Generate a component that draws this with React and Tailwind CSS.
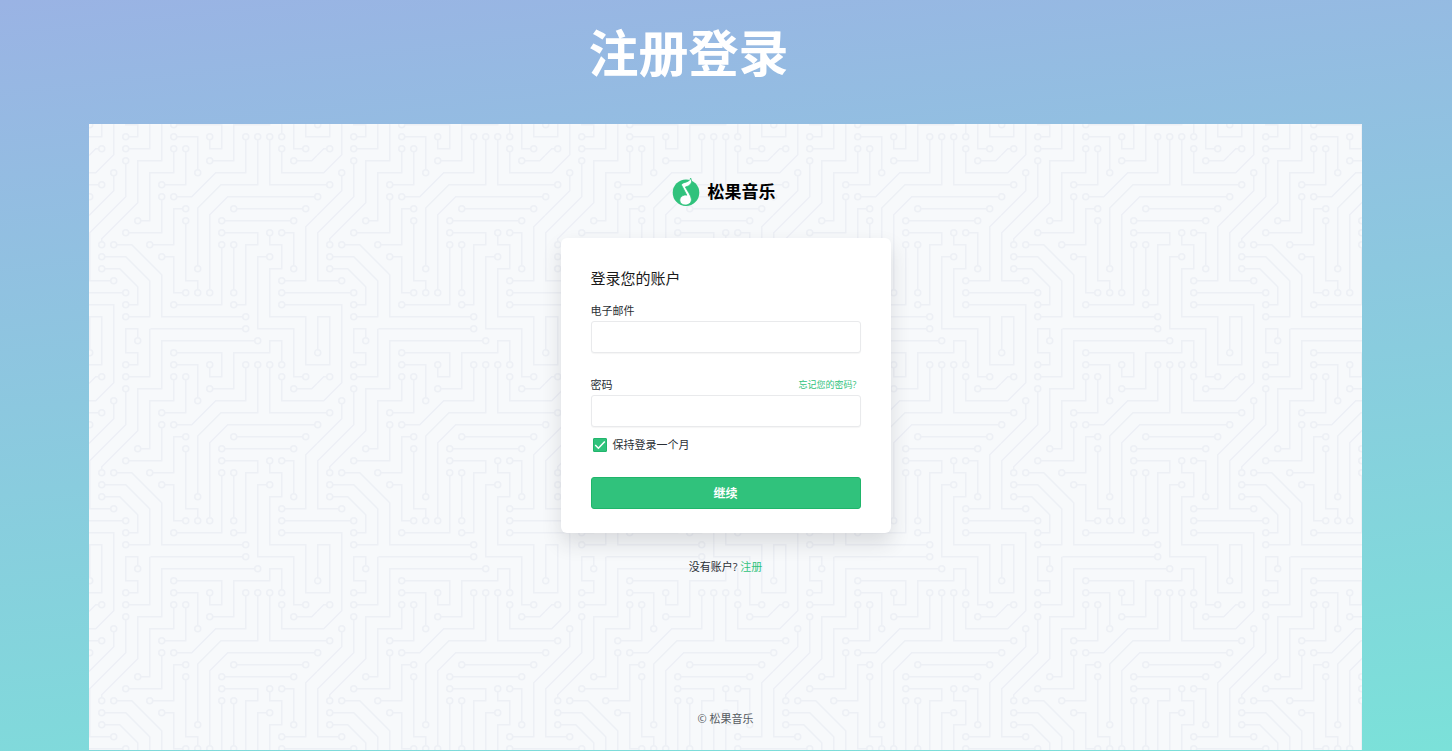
import React, { useState } from "react";

const traces = [
  "M0 225H49",
  "M82 273H209",
  "M257 225H304",
  "M257 241H304",
  "M177 129H273",
  "M0 81H17",
  "M193 113H289",
  "M257 0V17",
  "M193 161V225",
  "M241 17V81H304",
  "M257 33V65H304",
  "M129 129V209H145V225",
  "M129 113H113V161H81",
  "M113 241H177V161",
  "M97 177H113V225H129",
  "M65 289V273H49V304",
  "M241 177H225V273H273V304",
  "M257 145H273V193",
  "M193 241H209V161H225V145H177",
  "M289 33H273V0",
  "M97 97V145H49",
  "M49 33H81V0",
  "M113 33V65H81V129H65",
  "M97 81H129V33",
  "M113 17H145V65",
  "M225 289H97V304",
  "M241 145V161H257V193H241V257H289V304",
  "M49 17H65V1H48",
  "M161 49H193V1H242",
  "M113 1H177V33H161V17",
  "M113 97H137L169 65H209V17",
  "M145 193V112L176 81H225V17",
  "M161 225V121L185 97H304",
  "M17 161V153L65 105V49H97V0",
  "M49 49V97L1 145V209H33",
  "M33 65V89L0 122",
  "M17 33H9L0 42",
  "M273 49H297L304 42",
  "M257 209H289V137L304 122",
  "M49 241H65V217L41 193H17",
  "M209 257H97V201L57 161H33",
  "M49 257H81V209L49 177H17",
  "M33 0V41L9 65H0",
  "M1 304V257H17V304",
  "M0 241H33V304",
  "M0 17H17V0",
  "M289 0V17H304",
  "M241 304V289H257V304",
  "M81 273V304",
];

const nodes = [
  [49, 225], [209, 273], [257, 225], [257, 241], [273, 129], [177, 129],
  [17, 81], [193, 113], [289, 113], [257, 17], [193, 225], [193, 161],
  [241, 17], [257, 33], [129, 129], [145, 225], [129, 113], [81, 161],
  [113, 241], [177, 161], [97, 177], [129, 225], [65, 289], [241, 177],
  [257, 145], [273, 193], [193, 241], [177, 145], [289, 33], [97, 97],
  [49, 145], [49, 33], [113, 33], [65, 129], [97, 81], [129, 33],
  [113, 17], [145, 65], [225, 289], [241, 145], [49, 17], [161, 49],
  [113, 1], [113, 305], [161, 17], [113, 97], [209, 17], [145, 193],
  [225, 17], [161, 225], [305, 97], [1, 97], [17, 161], [49, 49],
  [33, 209], [33, 65], [17, 33], [273, 49], [257, 209], [49, 241],
  [17, 193], [209, 257], [33, 161], [49, 257], [17, 177], [1, 1],
  [305, 1], [1, 305], [305, 305],
];

const CircuitBackground = () => (
  <svg className="absolute inset-0 w-full h-full" aria-hidden="true">
    <defs>
      <pattern
        id="circuit"
        width="228"
        height="228"
        patternUnits="userSpaceOnUse"
        viewBox="0 0 304 304"
      >
        <path d={traces.join("")} fill="none" stroke="#edf0f5" strokeWidth="2" />
        {nodes.map(([x, y]) => (
          <circle
            key={`${x}-${y}`}
            cx={x}
            cy={y}
            r="4"
            fill="#f7f9fb"
            stroke="#edf0f5"
            strokeWidth="2"
          />
        ))}
      </pattern>
    </defs>
    <rect width="100%" height="100%" fill="url(#circuit)" />
  </svg>
);

const Logo = () => (
  <div className="flex items-center gap-2 pr-1">
    <svg className="w-7 h-7" viewBox="0 0 28 28" aria-hidden="true">
      <circle cx="14" cy="14.7" r="13.3" fill="#30c27c" />
      <path
        d="M18.6 0C18.4 2.4 16 3.6 13 4.4C10.6 5.1 9.2 5.8 9.6 7.2L14.8 17.2C11.2 16.4 7.8 18.8 7.8 22.2C7.8 25.2 10.2 27 13.2 27C16.8 27 19.6 24.6 19.4 21.2C19.2 17.6 14.8 12 13.4 9C17.6 8 21.4 5 18.6 0Z"
        fill="#fff"
        stroke="#30c27c"
        strokeWidth="0.8"
      />
    </svg>
    <span className="text-[17px] leading-7 font-bold text-black">松果音乐</span>
  </div>
);

const Field = ({ id, label, type, children }) => (
  <div>
    <div className="flex items-center justify-between h-4 mb-0.5">
      <label htmlFor={id}>{label}</label>
      {children}
    </div>
    <input
      id={id}
      type={type}
      className="block w-full h-8 px-2 bg-white border border-[#e9eaec] rounded-[3px] shadow-[0_1px_1px_rgba(0,0,0,0.04)] outline-none focus:border-[#30c27c]"
    />
  </div>
);

const App = () => {
  const [keep, setKeep] = useState(true);

  return (
    <div className="min-h-screen flex flex-col pl-[89px] pr-[90px] pb-px bg-[linear-gradient(174deg,#9ab3e4_0%,#7be1d9_100%)] font-['Open_Sans','Noto_Sans_CJK_SC',sans-serif]">
      <h1 className="h-[124px] pt-[17px] pr-[74px] text-center text-[50px] leading-[72px] font-bold text-white">
        注册登录
      </h1>

      <main className="relative flex-1 flex flex-col bg-[#f7f9fb]">
        <CircuitBackground />
        <div className="relative flex-1 flex flex-col items-center pt-[54px] pb-[23px] text-[11px] leading-4 text-[#2a2f35]">
          <Logo />

          <form
            onSubmit={(e) => e.preventDefault()}
            className="w-[330px] mt-8 px-[30px] pt-[30px] pb-6 bg-white rounded-md shadow-[0_10px_20px_rgba(40,44,50,0.14)]"
          >
            <h2 className="mb-3.5 text-[15px] leading-[21px] text-[#1a1a1a]">
              登录您的账户
            </h2>
            <div className="flex flex-col gap-6">
              <Field id="email" label="电子邮件" type="email" />
              <Field id="password" label="密码" type="password">
                <a href="#forgot" className="mr-1 text-[9px] text-[#30c27c]">
                  忘记您的密码?
                </a>
              </Field>
            </div>

            <label className="flex items-center gap-1.5 mt-2.5 pl-0.5">
              <span className="relative flex w-3.5 h-3.5">
                <input
                  type="checkbox"
                  checked={keep}
                  onChange={(e) => setKeep(e.target.checked)}
                  className="peer appearance-none w-3.5 h-3.5 rounded-[1px] border border-[#22b56c] checked:bg-[#30c27c]"
                />
                <svg
                  className="absolute inset-0 w-3.5 h-3.5 pointer-events-none opacity-0 peer-checked:opacity-100"
                  viewBox="0 0 14 14"
                  fill="none"
                  stroke="#fff"
                  strokeWidth="1.5"
                  aria-hidden="true"
                >
                  <path d="M2.2 7L5.4 10.2L11.8 3.6" />
                </svg>
              </span>
              保持登录一个月
            </label>

            <button
              type="submit"
              className="block w-full h-8 mt-6 pt-0.5 rounded-[3px] border border-[#1fb56a] bg-[#30c27c] text-[12px] font-bold text-white"
            >
              继续
            </button>
          </form>

          <p className="mt-[26px]">
            没有账户?{" "}
            <a href="#register" className="text-[#30c27c]">
              注册
            </a>
          </p>

          <footer className="mt-auto text-[#555a60]">© 松果音乐</footer>
        </div>
      </main>
    </div>
  );
};

export default App;
